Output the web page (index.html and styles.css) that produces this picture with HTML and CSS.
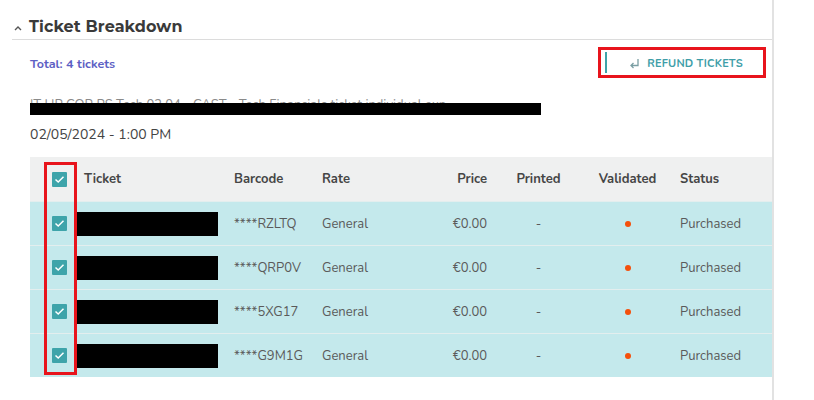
FILE: index.html
```html
<!DOCTYPE html>
<html>
<head>
<meta charset="utf-8">
<link rel="stylesheet" href="styles.css">
</head>
<body>
<div class="page">
  <div class="title-row">
    <svg class="chev" width="8" height="6" viewBox="0 0 8 6"><path d="M1 5 L4 2 L7 5" fill="none" stroke="#555" stroke-width="1.4"/></svg>
    <h2 class="title">Ticket Breakdown</h2>
  </div>
  <div class="summary">
    <div class="total">Total: 4 tickets</div>
    <div class="highlight">
      <button class="refund">
        <svg width="11" height="11" viewBox="0 0 11 11"><path d="M9 1 V7.5 H2 M4.5 5 L2 7.5 L4.5 10" fill="none" stroke="#7a9ea3" stroke-width="1.3"/></svg>
        <span>REFUND TICKETS</span>
      </button>
    </div>
  </div>
  <div class="event">
    <div class="event-name">IT HP COR PS Tech 02.04 - CAST - Tech Financials ticket individual exp</div>
    <div class="redact-bar"></div>
  </div>
  <div class="date">02/05/2024 - 1:00 PM</div>
  <div class="grid">
    <div class="row head">
      <div class="cell cb"><span class="check"><svg width="11" height="9" viewBox="0 0 11 9"><path d="M1.5 4.5 L4.2 7 L9.5 1.8" fill="none" stroke="#fff" stroke-width="1.5"/></svg></span></div>
      <div class="cell ticket">Ticket</div>
      <div class="cell">Barcode</div>
      <div class="cell">Rate</div>
      <div class="cell right">Price</div>
      <div class="cell center">Printed</div>
      <div class="cell center">Validated</div>
      <div class="cell status">Status</div>
    </div>
    <div class="row">
      <div class="cell cb"><span class="check"><svg width="11" height="9" viewBox="0 0 11 9"><path d="M1.5 4.5 L4.2 7 L9.5 1.8" fill="none" stroke="#fff" stroke-width="1.5"/></svg></span></div>
      <div class="cell ticket"><span class="redact"></span></div>
      <div class="cell">****RZLTQ</div>
      <div class="cell">General</div>
      <div class="cell right">€0.00</div>
      <div class="cell center">-</div>
      <div class="cell center"><span class="dot"></span></div>
      <div class="cell status">Purchased</div>
    </div>
    <div class="row">
      <div class="cell cb"><span class="check"><svg width="11" height="9" viewBox="0 0 11 9"><path d="M1.5 4.5 L4.2 7 L9.5 1.8" fill="none" stroke="#fff" stroke-width="1.5"/></svg></span></div>
      <div class="cell ticket"><span class="redact"></span></div>
      <div class="cell">****QRP0V</div>
      <div class="cell">General</div>
      <div class="cell right">€0.00</div>
      <div class="cell center">-</div>
      <div class="cell center"><span class="dot"></span></div>
      <div class="cell status">Purchased</div>
    </div>
    <div class="row">
      <div class="cell cb"><span class="check"><svg width="11" height="9" viewBox="0 0 11 9"><path d="M1.5 4.5 L4.2 7 L9.5 1.8" fill="none" stroke="#fff" stroke-width="1.5"/></svg></span></div>
      <div class="cell ticket"><span class="redact"></span></div>
      <div class="cell">****5XG17</div>
      <div class="cell">General</div>
      <div class="cell right">€0.00</div>
      <div class="cell center">-</div>
      <div class="cell center"><span class="dot"></span></div>
      <div class="cell status">Purchased</div>
    </div>
    <div class="row">
      <div class="cell cb"><span class="check"><svg width="11" height="9" viewBox="0 0 11 9"><path d="M1.5 4.5 L4.2 7 L9.5 1.8" fill="none" stroke="#fff" stroke-width="1.5"/></svg></span></div>
      <div class="cell ticket"><span class="redact"></span></div>
      <div class="cell">****G9M1G</div>
      <div class="cell">General</div>
      <div class="cell right">€0.00</div>
      <div class="cell center">-</div>
      <div class="cell center"><span class="dot"></span></div>
      <div class="cell status">Purchased</div>
    </div>
    <div class="col-highlight"></div>
  </div>
</div>
</body>
</html>
```
FILE: styles.css
```css
* { box-sizing: border-box; }
html, body { margin: 0; padding: 0; background: #fff; }
body { font-family: "Nunito", Lato, "Noto Sans", sans-serif; color: #555; }

.page {
  width: 774px;
  min-height: 400px;
  border-right: 2px solid #e2e2e2;
}

.title-row {
  display: flex;
  align-items: center;
  margin-left: 12px;
  padding-top: 15px;
  height: 40px;
  border-bottom: 1px solid #dcdcdc;
}
.chev { margin: 0 0 0 2px; position: relative; top: 1px; }
.title {
  margin: 0 0 0 7px;
  font-family: "Montserrat", Inter, sans-serif;
  font-size: 16px;
  font-weight: 700;
  color: #3a3a3a;
  line-height: 22px;
  letter-spacing: 0.1px;
}

.summary {
  display: flex;
  justify-content: space-between;
  align-items: center;
  padding: 7px 6px 0 30px;
  height: 38px;
}
.total {
  font-size: 12.5px;
  font-weight: 700;
  color: #5d60c4;
  position: relative;
  top: 1px;
}
.highlight {
  width: 168px;
  height: 31px;
  border: 3px solid #e8141c;
  padding: 2px 4px;
  display: flex;
}
.refund {
  flex: 1;
  height: 21px;
  display: flex;
  align-items: center;
  justify-content: center;
  gap: 7px;
  padding: 1px 0 0 6px;
  border: none;
  border-left: 2px solid #3fa3a9;
  background: #fff;
  font-family: "Nunito", Lato, sans-serif;
  font-size: 11px;
  font-weight: 700;
  color: #3e9ea8;
  letter-spacing: 0.2px;
}

.event {
  position: relative;
  margin: 17px 0 0 30px;
  height: 20px;
  overflow: hidden;
}
.event-name {
  font-size: 13px;
  color: #8a8a8a;
  line-height: 18px;
  margin-top: 1px;
}
.redact-bar {
  position: absolute;
  left: -4px;
  top: 8px;
  width: 515px;
  height: 12px;
  background: #000;
}

.date {
  margin: 10px 0 0 30px;
  font-size: 14px;
  color: #444;
  line-height: 20px;
}

.grid {
  position: relative;
  margin: 12px 0 0 30px;
  width: 742px;
}
.row {
  display: grid;
  grid-template-columns: 47px 157px 88px 98px 67px 103px 75px 1fr;
  height: 44px;
  align-items: center;
  background: #c4e9ec;
  border-top: 1px solid #e3eeee;
  font-size: 13px;
  color: #5a5a5a;
}
.row.head {
  background: #eff0f0;
  border-top: none;
  font-weight: 700;
  color: #454545;
}
.cell { white-space: nowrap; }
.cell.cb { padding-left: 22px; display: flex; }
.cell.ticket { padding-left: 7px; }
.cell.right { text-align: right; }
.cell.center { text-align: center; }
.cell.status { padding-left: 15px; }

.check {
  width: 15px;
  height: 15px;
  background: #3ea4aa;
  border-radius: 1px;
  display: flex;
  align-items: center;
  justify-content: center;
}
.redact {
  display: block;
  width: 141px;
  height: 24px;
  margin-left: -7px;
  background: #000;
}
.dot {
  display: inline-block;
  width: 6px;
  height: 6px;
  border-radius: 50%;
  background: #f4500c;
  vertical-align: middle;
}

.col-highlight {
  position: absolute;
  left: 14px;
  top: 5px;
  width: 33px;
  height: 213px;
  border: 3px solid #e8141c;
}
```
